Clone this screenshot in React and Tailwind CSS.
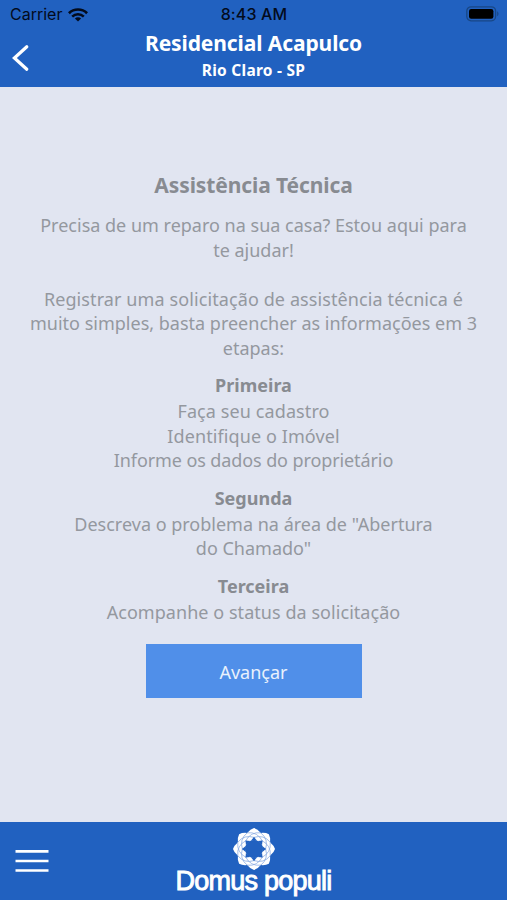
import React from "react";

const PETALS = [0, 45, 90, 135, 180, 225, 270, 315];

const WifiIcon = () => (
  <svg className="h-[14px] w-[20px]" viewBox="0 0 20 14" fill="none" stroke="#030b1c">
    <path d="M0.9 5.2a13 13 0 0 1 18.2 0" strokeWidth="2.7" />
    <path d="M4.2 8.6a8.3 8.3 0 0 1 11.6 0" strokeWidth="2.5" />
    <path d="M10 13.6l-3.1-3.1a4.4 4.4 0 0 1 6.2 0z" fill="#030b1c" stroke="none" />
  </svg>
);

const BatteryIcon = () => (
  <svg className="h-[16px] w-[34px]" viewBox="0 0 34 16">
    <rect x="0.8" y="0.8" width="28.8" height="14" rx="4.2" fill="none" stroke="#184786" strokeWidth="1.3" />
    <rect x="3" y="3" width="24.4" height="9.8" rx="2.2" fill="#000" />
    <path d="M31.2 5.3c1.7.7 1.7 4.3 0 5z" fill="#184786" />
  </svg>
);

// Eight interlaced petals around a star-shaped opening
const Rosette = () => (
  <svg className="h-[42px] w-[42px]" viewBox="-21 -21 42 42">
    <circle r="17.4" fill="#fff" />
    {PETALS.map((angle) => (
      <path
        key={angle}
        transform={`rotate(${angle})`}
        d="M0 -21Q3.6 -20 6.6 -16.2L0 -12L-6.6 -16.2Q-3.6 -20 0 -21z"
        fill="#fff"
      />
    ))}
    {PETALS.map((angle) => (
      <path
        key={angle}
        transform={`rotate(${angle})`}
        d="M-6.6 -16.2Q3.5 -17.5 8.6 -7.6M6.6 -16.2Q-3.5 -17.5 -8.6 -7.6"
        fill="none"
        stroke="#7fa4df"
        strokeWidth="0.7"
      />
    ))}
    <circle r="9" fill="#2161c0" />
    {PETALS.map((angle) => (
      <path key={angle} transform={`rotate(${angle})`} d="M0 -12L3.1 -8.3H-3.1z" fill="#2161c0" />
    ))}
  </svg>
);

const Step = ({ title, children }) => (
  <section className="mb-[13px]">
    <h2 className="mb-px text-[18px] leading-[25px] font-bold text-[#888b91]">{title}</h2>
    {children}
  </section>
);

const App = () => {
  return (
    <div className="flex h-[900px] w-[507px] flex-col overflow-hidden bg-[#e1e5f1] font-['Noto_Sans',sans-serif]">
      <header className="h-[87px] bg-[#2161c0]">
        <div className="grid h-[29px] grid-cols-[1fr_100px_1fr] items-center pr-[7px] pl-[10px] font-['Inter',sans-serif] text-[#030b1c]">
          <div className="flex items-center gap-[6px] text-[16px] leading-[29px]">
            <span>Carrier</span>
            <WifiIcon />
          </div>
          <div className="pr-[2px] text-center text-[16px] leading-[29px] font-medium tracking-[0.15px]">8:43 AM</div>
          <div className="flex justify-end pb-px">
            <BatteryIcon />
          </div>
        </div>
        <div className="grid grid-cols-[40px_1fr_40px] text-white">
          <button className="flex items-center pt-[3px] pl-[12px]" aria-label="Voltar">
            <svg className="h-[28px] w-[18px]" viewBox="0 0 18 28" fill="none" stroke="#fff" strokeWidth="3.2">
              <path d="M14.8 2.8L2.4 14L14.8 25.2" strokeLinecap="round" strokeLinejoin="miter" />
            </svg>
          </button>
          <div className="text-center font-bold">
            <h1 className="text-[21px] leading-[28px] tracking-[-0.1px]">Residencial Acapulco</h1>
            <p className="text-[15.5px] leading-[26px] tracking-[0.25px]">Rio Claro - SP</p>
          </div>
        </div>
      </header>

      <main className="flex flex-1 flex-col items-center pt-[84px] text-center text-[18px] leading-[24.5px] whitespace-nowrap text-[#94989f]">
        <h1 className="mb-[14px] text-[21px] leading-[28px] font-bold tracking-[-0.1px] text-[#888b91]">
          Assistência Técnica
        </h1>
        <div className="mb-[24.5px]">
          <p>Precisa de um reparo na sua casa? Estou aqui para</p>
          <p>te ajudar!</p>
        </div>
        <div className="mb-[13px]">
          <p className="tracking-[0.1px]">Registrar uma solicitação de assistência técnica é</p>
          <p>muito simples, basta preencher as informações em 3</p>
          <p>etapas:</p>
        </div>
        <Step title="Primeira">
          <p className="tracking-[0.1px]">Faça seu cadastro</p>
          <p className="tracking-[0.1px]">Identifique o Imóvel</p>
          <p className="tracking-[-0.1px]">Informe os dados do proprietário</p>
        </Step>
        <Step title="Segunda">
          <p>Descreva o problema na área de "Abertura</p>
          <p>do Chamado"</p>
        </Step>
        <Step title="Terceira">
          <p className="tracking-[0.05px]">Acompanhe o status da solicitação</p>
        </Step>
        <button className="mt-[7px] h-[54px] w-[216px] bg-[#508fe9] pt-[2px] text-[18px] text-[#e9f1fc]">
          Avançar
        </button>
      </main>

      <footer className="grid h-[78px] grid-cols-[80px_1fr_80px] bg-[#2161c0]">
        <button className="flex items-start pt-[27px] pl-[15px]" aria-label="Menu">
          <svg className="h-[24px] w-[34px]" viewBox="0 0 34 24" stroke="#fff" strokeWidth="2.6">
            <path d="M0.5 2.4H33.5M0.5 12H33.5M0.5 21.5H33.5" />
          </svg>
        </button>
        <div className="flex flex-col items-center pt-[6px]">
          <Rosette />
          <span className="-mt-[4px] font-['Liberation_Sans',sans-serif] text-[27px] leading-[31px] tracking-[-0.75px] whitespace-nowrap text-white [-webkit-text-stroke:0.9px_white]">
            Domus populi
          </span>
        </div>
      </footer>
    </div>
  );
};

export default App;
